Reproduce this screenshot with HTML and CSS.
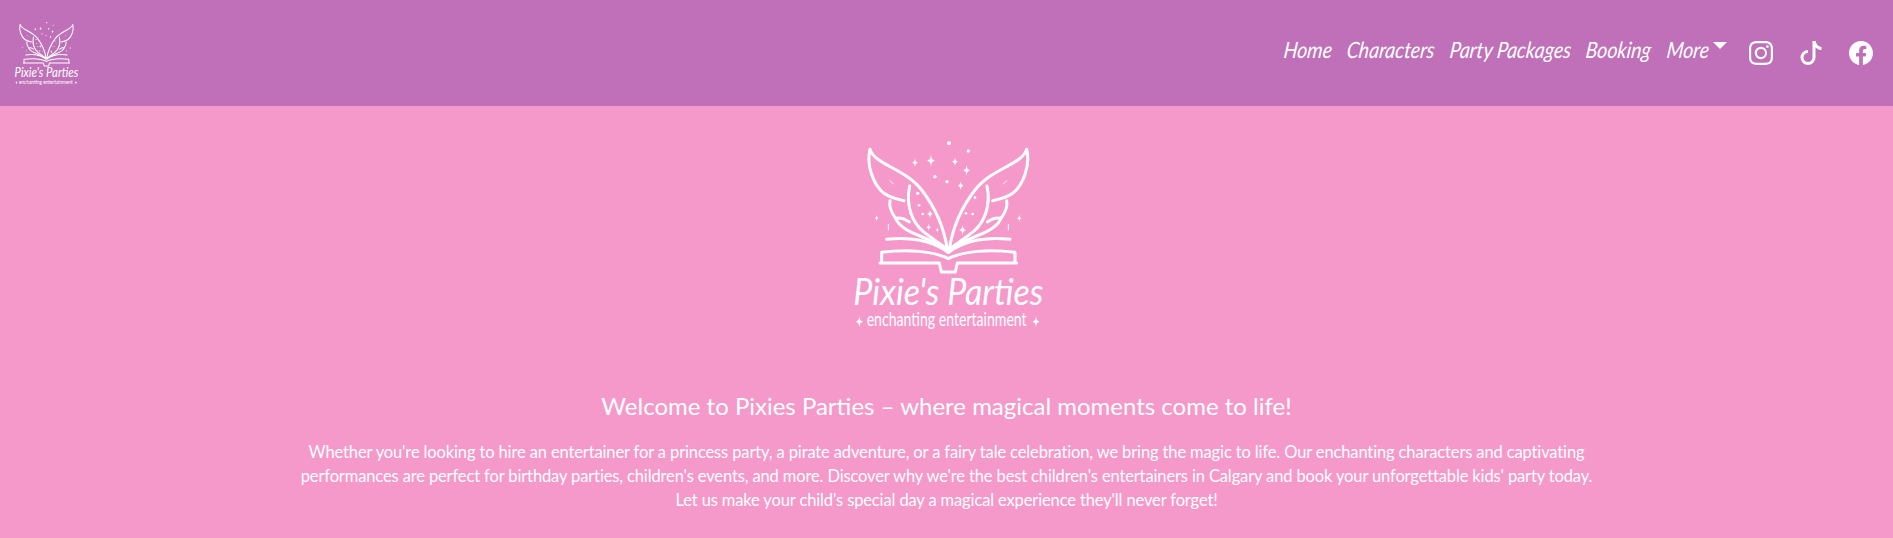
FILE: index.html
```html
<!DOCTYPE html>
<html lang="en">
<head>
  <meta charset="UTF-8">
  <meta name="viewport" content="width=device-width, initial-scale=1.0">
  <title>Pixies Parties</title>
  <link rel="stylesheet" href="styles.css">
</head>
<body>

  <!-- logo artwork, used in the header and in the hero -->
  <svg class="defs" width="0" height="0" aria-hidden="true">
    <defs>
      <path id="spark" d="M0-14C1-4 3-2 9 0 3 2 1 4 0 14-1 4-3 2-9 0-3-2-1-4 0-14z"/>
      <g id="wing">
        <path d="M90 58C105 105 195 115 245 180 285 232 312 290 322 358"/>
        <path d="M90 58C78 105 100 165 132 190 150 203 172 208 192 212"/>
        <path d="M150 212C146 232 156 250 167 265 180 262 194 266 208 276"/>
        <path d="M167 265C176 290 205 305 240 318 270 330 298 345 322 362"/>
        <path d="M209 168C197 225 215 275 250 305 275 325 300 340 322 358"/>
        <path class="thin" d="M150 152L160 162M145 283V300"/>
      </g>
      <symbol id="logo" viewBox="0 0 660 630">
        <g class="logo-lines">
          <use href="#wing"/>
          <use href="#wing" transform="translate(650 0) scale(-1 1)"/>
          <path d="M140 328C200 320 275 328 325 368 375 328 450 320 510 328"/>
          <path d="M125 397V367C200 358 280 362 325 386 370 362 450 358 525 367V397"/>
          <path d="M120 399H298L304 426H346L352 399H530"/>
        </g>
        <g class="logo-fill">
          <circle cx="327" cy="40" r="6"/>
          <circle cx="385" cy="63" r="5"/>
          <circle cx="285" cy="140" r="5"/>
          <circle cx="321" cy="155" r="5"/>
          <circle cx="233" cy="190" r="5"/>
          <circle cx="237" cy="226" r="4"/>
          <circle cx="248" cy="252" r="4"/>
          <circle cx="405" cy="203" r="4"/>
          <circle cx="378" cy="250" r="4"/>
          <circle cx="398" cy="252" r="4"/>
          <use href="#spark" transform="translate(225 98)"/>
          <use href="#spark" transform="translate(273 92) scale(1.3)"/>
          <use href="#spark" transform="translate(345 95)"/>
          <use href="#spark" transform="translate(380 121) scale(1.2)"/>
          <use href="#spark" transform="translate(362 167)"/>
          <use href="#spark" transform="translate(270 252)"/>
          <use href="#spark" transform="translate(266 292) scale(.8)"/>
          <use href="#spark" transform="translate(292 300) scale(.6)"/>
          <use href="#spark" transform="translate(368 300) scale(1.2)"/>
          <use href="#spark" transform="translate(110 264) scale(.7)"/>
          <use href="#spark" transform="translate(538 265) scale(.8)"/>
          <use href="#spark" transform="translate(58 575) scale(1.2)"/>
          <use href="#spark" transform="translate(588 575) scale(1.2)"/>
          <text class="logo-name" x="40" y="526" textLength="570" lengthAdjust="spacingAndGlyphs">Pixie's Parties</text>
          <text class="logo-tag" x="80" y="588" textLength="480" lengthAdjust="spacingAndGlyphs">enchanting entertainment</text>
        </g>
      </symbol>
    </defs>
  </svg>

  <header class="topbar">
    <a class="brand" href="#"><svg class="brand-logo"><use href="#logo"/></svg></a>
    <nav class="nav">
      <a href="#">Home</a>
      <a href="#">Characters</a>
      <a href="#">Party Packages</a>
      <a href="#">Booking</a>
      <a class="more" href="#"><span>More</span></a>
    </nav>
    <div class="social">
      <a href="#" aria-label="Instagram">
        <svg viewBox="0 0 16 16"><path d="M8 0C5.829 0 5.556.01 4.703.048 3.85.088 3.269.222 2.76.42a3.9 3.9 0 0 0-1.417.923A3.9 3.9 0 0 0 .42 2.76C.222 3.268.087 3.85.048 4.7.01 5.555 0 5.827 0 8.001c0 2.172.01 2.444.048 3.297.04.852.174 1.433.372 1.942.205.526.478.972.923 1.417.444.445.89.719 1.416.923.51.198 1.09.333 1.942.372C5.555 15.99 5.827 16 8 16s2.444-.01 3.298-.048c.851-.04 1.434-.174 1.943-.372a3.9 3.9 0 0 0 1.416-.923c.445-.445.718-.891.923-1.417.197-.509.332-1.09.372-1.942C15.99 10.445 16 10.173 16 8s-.01-2.445-.048-3.299c-.04-.851-.175-1.433-.372-1.941a3.9 3.9 0 0 0-.923-1.417A3.9 3.9 0 0 0 13.24.42c-.51-.198-1.092-.333-1.943-.372C10.443.01 10.172 0 7.998 0zm-.717 1.442h.718c2.136 0 2.389.007 3.232.046.78.035 1.204.166 1.486.275.373.145.64.319.92.599s.453.546.598.92c.11.281.24.705.275 1.485.039.843.047 1.096.047 3.231s-.008 2.389-.047 3.232c-.035.78-.166 1.203-.275 1.485a2.5 2.5 0 0 1-.599.919c-.28.28-.546.453-.92.598-.28.11-.704.24-1.485.276-.843.038-1.096.047-3.232.047s-2.39-.009-3.233-.047c-.78-.036-1.203-.166-1.485-.276a2.5 2.5 0 0 1-.92-.598 2.5 2.5 0 0 1-.6-.92c-.109-.281-.24-.705-.275-1.485-.038-.843-.046-1.096-.046-3.233s.008-2.388.046-3.231c.036-.78.166-1.204.276-1.486.145-.373.319-.64.599-.92s.546-.453.92-.598c.282-.11.705-.24 1.485-.276.738-.034 1.024-.044 2.515-.045zm4.988 1.328a.96.96 0 1 0 0 1.92.96.96 0 0 0 0-1.92m-4.27 1.122a4.109 4.109 0 1 0 0 8.217 4.109 4.109 0 0 0 0-8.217m0 1.441a2.667 2.667 0 1 1 0 5.334 2.667 2.667 0 0 1 0-5.334"/></svg>
      </a>
      <a href="#" aria-label="TikTok">
        <svg viewBox="0 0 16 16"><path d="M9 0h1.98c.144.715.54 1.617 1.235 2.512C12.895 3.389 13.797 4 15 4v2c-1.753 0-3.07-.814-4-1.829V11a5 5 0 1 1-5-5v2a3 3 0 1 0 3 3z"/></svg>
      </a>
      <a href="#" aria-label="Facebook">
        <svg viewBox="0 0 16 16"><path d="M16 8.049c0-4.446-3.582-8.05-8-8.05C3.58 0-.002 3.603-.002 8.05c0 4.017 2.926 7.347 6.75 7.951v-5.625h-2.03V8.05H6.75V6.275c0-2.017 1.195-3.131 3.022-3.131.876 0 1.791.157 1.791.157v1.98h-1.009c-.993 0-1.303.621-1.303 1.258v1.51h2.218l-.354 2.326H9.25V16c3.824-.604 6.75-3.934 6.75-7.951"/></svg>
      </a>
    </div>
  </header>

  <main class="hero">
    <svg class="hero-logo"><use href="#logo"/></svg>
    <h1>Welcome to Pixies Parties – where magical moments come to life!</h1>
    <p>Whether you're looking to hire an entertainer for a princess party, a pirate adventure, or a fairy tale celebration, we bring the magic to life. Our enchanting characters and captivating performances are perfect for birthday parties, children's events, and more. Discover why we're the best children's entertainers in Calgary and book your unforgettable kids' party today. Let us make your child's special day a magical experience they'll never forget!</p>
  </main>

</body>
</html>
```

FILE: styles.css
```css
body {
  margin: 0;
  background-color: #f599cb;
  color: white;
  font-family: "Lato", "Open Sans", sans-serif;
}
a {
  color: white;
  text-decoration: none;
}
.defs {
  position: absolute;
}

/* header */
.topbar {
  display: flex;
  align-items: center;
  height: 106px;
  padding: 0 20px 0 10px;
  background-color: #bf70b8;
}
.brand {
  display: flex;
  margin-right: auto;
}
.brand-logo {
  width: 74px;
  height: 71px;
}
.nav {
  display: flex;
  gap: 15px;
  margin-bottom: 8px;
  font-size: 19.5px;
  font-style: italic;
}
/* no handwriting font here, so lean and stretch the italic */
.nav > a:not(.more),
.more span {
  display: inline-block;
  transform: scaleY(1.15) skewX(-8deg);
}
.more {
  display: flex;
  align-items: center;
  gap: 4px;
}
.more::after {
  content: "";
  margin-bottom: 7px;
  border-top: 7px solid white;
  border-left: 7px solid transparent;
  border-right: 7px solid transparent;
}
.social {
  display: flex;
  gap: 26px;
  margin-left: 22px;
}
.social a {
  display: flex;
}
.social svg {
  width: 24px;
  height: 24px;
  fill: white;
}

/* logo */
.logo-lines {
  fill: none;
  stroke: white;
  stroke-width: 9;
  stroke-linecap: round;
  stroke-linejoin: round;
}
.thin {
  stroke-width: 3;
}
.logo-fill {
  fill: white;
}
.logo-name {
  font-family: "Lato", sans-serif;
  font-style: italic;
  font-size: 112px;
}
.logo-tag {
  font-family: "Lato", sans-serif;
  font-size: 56px;
}

/* hero */
.hero {
  display: flex;
  flex-direction: column;
  align-items: center;
  padding-top: 24px;
  text-align: center;
}
.hero-logo {
  width: 220px;
  height: 210px;
  margin-left: 6px;
}
.hero h1 {
  margin: 49px 0 17px;
  font-size: 24px;
  font-weight: 400;
  line-height: 34px;
}
.hero p {
  width: 1300px;
  margin: 0;
  font-size: 16.5px;
  letter-spacing: -0.13px;
  line-height: 24px;
}
```
